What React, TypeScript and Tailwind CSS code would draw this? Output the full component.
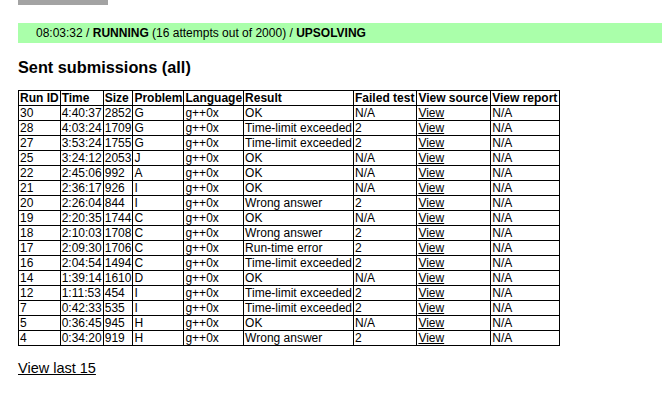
import React from "react";

const rows: [string, string, string, string, string, string, string][] = [
  ["30", "4:40:37", "2852", "G", "g++0x", "OK", "N/A"],
  ["28", "4:03:24", "1709", "G", "g++0x", "Time-limit exceeded", "2"],
  ["27", "3:53:24", "1755", "G", "g++0x", "Time-limit exceeded", "2"],
  ["25", "3:24:12", "2053", "J", "g++0x", "OK", "N/A"],
  ["22", "2:45:06", "992", "A", "g++0x", "OK", "N/A"],
  ["21", "2:36:17", "926", "I", "g++0x", "OK", "N/A"],
  ["20", "2:26:04", "844", "I", "g++0x", "Wrong answer", "2"],
  ["19", "2:20:35", "1744", "C", "g++0x", "OK", "N/A"],
  ["18", "2:10:03", "1708", "C", "g++0x", "Wrong answer", "2"],
  ["17", "2:09:30", "1706", "C", "g++0x", "Run-time error", "2"],
  ["16", "2:04:54", "1494", "C", "g++0x", "Time-limit exceeded", "2"],
  ["14", "1:39:14", "1610", "D", "g++0x", "OK", "N/A"],
  ["12", "1:11:53", "454", "I", "g++0x", "Time-limit exceeded", "2"],
  ["7", "0:42:33", "535", "I", "g++0x", "Time-limit exceeded", "2"],
  ["5", "0:36:45", "945", "H", "g++0x", "OK", "N/A"],
  ["4", "0:34:20", "919", "H", "g++0x", "Wrong answer", "2"],
];

const headers = ["Run ID", "Time", "Size", "Problem", "Language", "Result", "Failed test", "View source", "View report"];

export default function App() {
  return (
    <div className="bg-white min-h-[398px] w-[662px] pl-[18px] text-black font-['Liberation_Sans',Arial,sans-serif]">
      <div className="h-[5px] w-[90px] bg-[#a3a3a3]" />
      <div className="mt-[18px] h-[20px] bg-[#aaffaa] pl-[18px] text-[12px] leading-[20px]">
        08:03:32 / <b>RUNNING</b> (16 attempts out of 2000) / <b>UPSOLVING</b>
      </div>
      <h2 className="mt-[14px] h-[20px] text-[16.3px] leading-[20px] font-bold">Sent submissions (all)</h2>
      <table className="mt-[13px] border-collapse border border-black text-[12px] leading-[14px]">
        <thead>
          <tr>
            {headers.map((h, i) => (
              <th
                key={h}
                className={
                  i >= 6
                    ? "border border-black pl-px pr-[2px] py-0 text-left font-bold whitespace-nowrap"
                    : "border border-black px-px py-0 text-left font-bold whitespace-nowrap"
                }
              >
                {h}
              </th>
            ))}
          </tr>
        </thead>
        <tbody>
          {rows.map((r) => (
            <tr key={r[0]}>
              {r.map((c, i) => (
                <td key={i} className="border border-black px-px py-0 text-left whitespace-nowrap">
                  {c}
                </td>
              ))}
              <td className="border border-black px-px py-0 whitespace-nowrap">
                <a href="#" className="underline text-black">View</a>
              </td>
              <td className="border border-black px-px py-0 whitespace-nowrap">N/A</td>
            </tr>
          ))}
        </tbody>
      </table>
      <div className="mt-[14px] text-[14.5px] leading-[16px]">
        <a href="#" className="underline text-black">View last 15</a>
      </div>
    </div>
  );
}
